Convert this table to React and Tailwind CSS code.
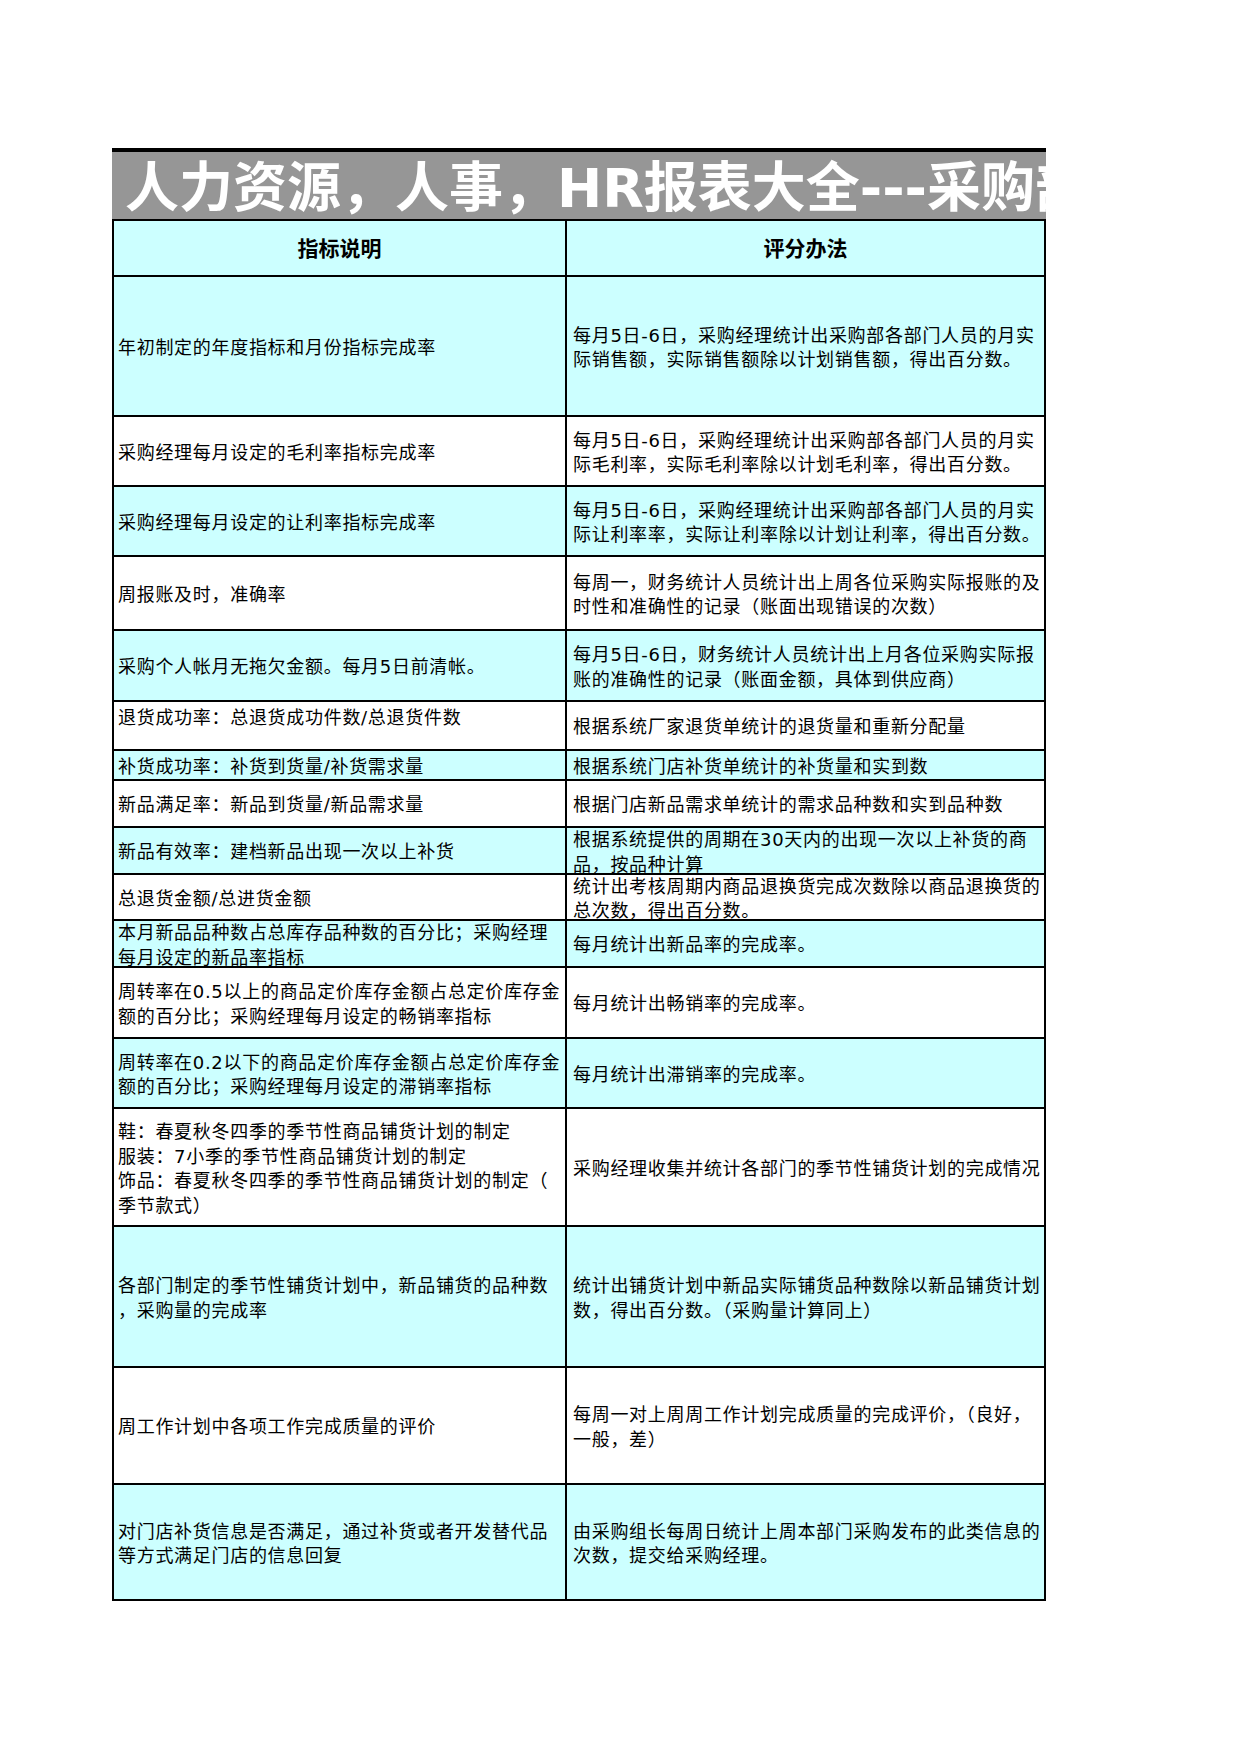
const rows = [
  {
    h: "h-[140px]",
    bg: "bg-[#ccffff]",
    a: ["年初制定的年度指标和月份指标完成率"],
    b: ["每月5日-6日，采购经理统计出采购部各部门人员的月实", "际销售额，实际销售额除以计划销售额，得出百分数。"],
  },
  {
    h: "h-[70px]",
    bg: "bg-white",
    a: ["采购经理每月设定的毛利率指标完成率"],
    b: ["每月5日-6日，采购经理统计出采购部各部门人员的月实", "际毛利率，实际毛利率除以计划毛利率，得出百分数。"],
  },
  {
    h: "h-[70px]",
    bg: "bg-[#ccffff]",
    a: ["采购经理每月设定的让利率指标完成率"],
    b: ["每月5日-6日，采购经理统计出采购部各部门人员的月实", "际让利率率，实际让利率除以计划让利率，得出百分数。"],
  },
  {
    h: "h-[74px]",
    bg: "bg-white",
    a: ["周报账及时，准确率"],
    b: ["每周一，财务统计人员统计出上周各位采购实际报账的及", "时性和准确性的记录（账面出现错误的次数）"],
  },
  {
    h: "h-[71px]",
    bg: "bg-[#ccffff]",
    a: ["采购个人帐月无拖欠金额。每月5日前清帐。"],
    b: ["每月5日-6日，财务统计人员统计出上月各位采购实际报", "账的准确性的记录（账面金额，具体到供应商）"],
  },
  {
    h: "h-[49px]",
    bg: "bg-white",
    a: ["退货成功率：总退货成功件数/总退货件数"],
    top: true,
    b: ["根据系统厂家退货单统计的退货量和重新分配量"],
  },
  {
    h: "h-[30px]",
    bg: "bg-[#ccffff]",
    a: ["补货成功率：补货到货量/补货需求量"],
    b: ["根据系统门店补货单统计的补货量和实到数"],
  },
  {
    h: "h-[47px]",
    bg: "bg-white",
    a: ["新品满足率：新品到货量/新品需求量"],
    b: ["根据门店新品需求单统计的需求品种数和实到品种数"],
  },
  {
    h: "h-[47px]",
    bg: "bg-[#ccffff]",
    a: ["新品有效率：建档新品出现一次以上补货"],
    b: ["根据系统提供的周期在30天内的出现一次以上补货的商", "品，按品种计算"],
  },
  {
    h: "h-[46px]",
    bg: "bg-white",
    a: ["总退货金额/总进货金额"],
    b: ["统计出考核周期内商品退换货完成次数除以商品退换货的", "总次数，得出百分数。"],
  },
  {
    h: "h-[47px]",
    bg: "bg-[#ccffff]",
    a: ["本月新品品种数占总库存品种数的百分比；采购经理", "每月设定的新品率指标"],
    b: ["每月统计出新品率的完成率。"],
  },
  {
    h: "h-[71px]",
    bg: "bg-white",
    a: ["周转率在0.5以上的商品定价库存金额占总定价库存金", "额的百分比；采购经理每月设定的畅销率指标"],
    b: ["每月统计出畅销率的完成率。"],
  },
  {
    h: "h-[70px]",
    bg: "bg-[#ccffff]",
    a: ["周转率在0.2以下的商品定价库存金额占总定价库存金", "额的百分比；采购经理每月设定的滞销率指标"],
    b: ["每月统计出滞销率的完成率。"],
  },
  {
    h: "h-[118px]",
    bg: "bg-white",
    a: [
      "鞋：春夏秋冬四季的季节性商品铺货计划的制定",
      "服装：7小季的季节性商品铺货计划的制定",
      "饰品：春夏秋冬四季的季节性商品铺货计划的制定（",
      "季节款式）",
    ],
    b: ["采购经理收集并统计各部门的季节性铺货计划的完成情况"],
  },
  {
    h: "h-[141px]",
    bg: "bg-[#ccffff]",
    a: ["各部门制定的季节性铺货计划中，新品铺货的品种数", "，采购量的完成率"],
    b: ["统计出铺货计划中新品实际铺货品种数除以新品铺货计划", "数，得出百分数。（采购量计算同上）"],
  },
  {
    h: "h-[117px]",
    bg: "bg-white",
    a: ["周工作计划中各项工作完成质量的评价"],
    b: ["每周一对上周周工作计划完成质量的完成评价，（良好，", "一般，差）"],
  },
  {
    h: "h-[116px]",
    bg: "bg-[#ccffff]",
    a: ["对门店补货信息是否满足，通过补货或者开发替代品", "等方式满足门店的信息回复"],
    b: ["由采购组长每周日统计上周本部门采购发布的此类信息的", "次数，提交给采购经理。"],
  },
];

function Cell({ row, lines, top, pad }) {
  return (
    <div
      className={`flex ${top ? "items-start" : "items-center"} overflow-hidden border-r-2 border-b-2 border-black pt-[4px] ${row.bg} ${row.h} ${pad}`}
    >
      <div className="whitespace-nowrap text-[18px] leading-[24.5px] tracking-[0.7px] text-black">
        {lines.map((l, i) => (
          <div key={i}>{l}</div>
        ))}
      </div>
    </div>
  );
}

export default function App() {
  return (
    <div className="min-h-[1754px] bg-white pt-[148px] pl-[112px] font-['DejaVu_Sans','Noto_Sans_CJK_SC',sans-serif]">
      <div className="w-[934px]">
        <div className="flex h-[71px] items-center overflow-hidden whitespace-nowrap border-t-4 border-black bg-[#969696] pt-[6px] pl-[13px]">
          <span className="text-[54px] font-bold leading-none text-white">
            人力资源，人事，HR报表大全---采购部绩效考核指标
          </span>
        </div>
        <div className="grid grid-cols-[453px_479px] border-t-2 border-l-2 border-black">
          <div className="flex h-[56px] items-center justify-center border-r-2 border-b-2 border-black bg-[#ccffff] pt-[4px] text-[21px] font-bold text-black">
            指标说明
          </div>
          <div className="flex h-[56px] items-center justify-center border-r-2 border-b-2 border-black bg-[#ccffff] pt-[4px] text-[21px] font-bold text-black">
            评分办法
          </div>
          {rows.map((r, i) => (
            <div key={i} className="contents">
              <Cell row={r} lines={r.a} top={r.top} pad="pl-[4px]" />
              <Cell row={r} lines={r.b} pad="pl-[6px]" />
            </div>
          ))}
        </div>
      </div>
    </div>
  );
}
